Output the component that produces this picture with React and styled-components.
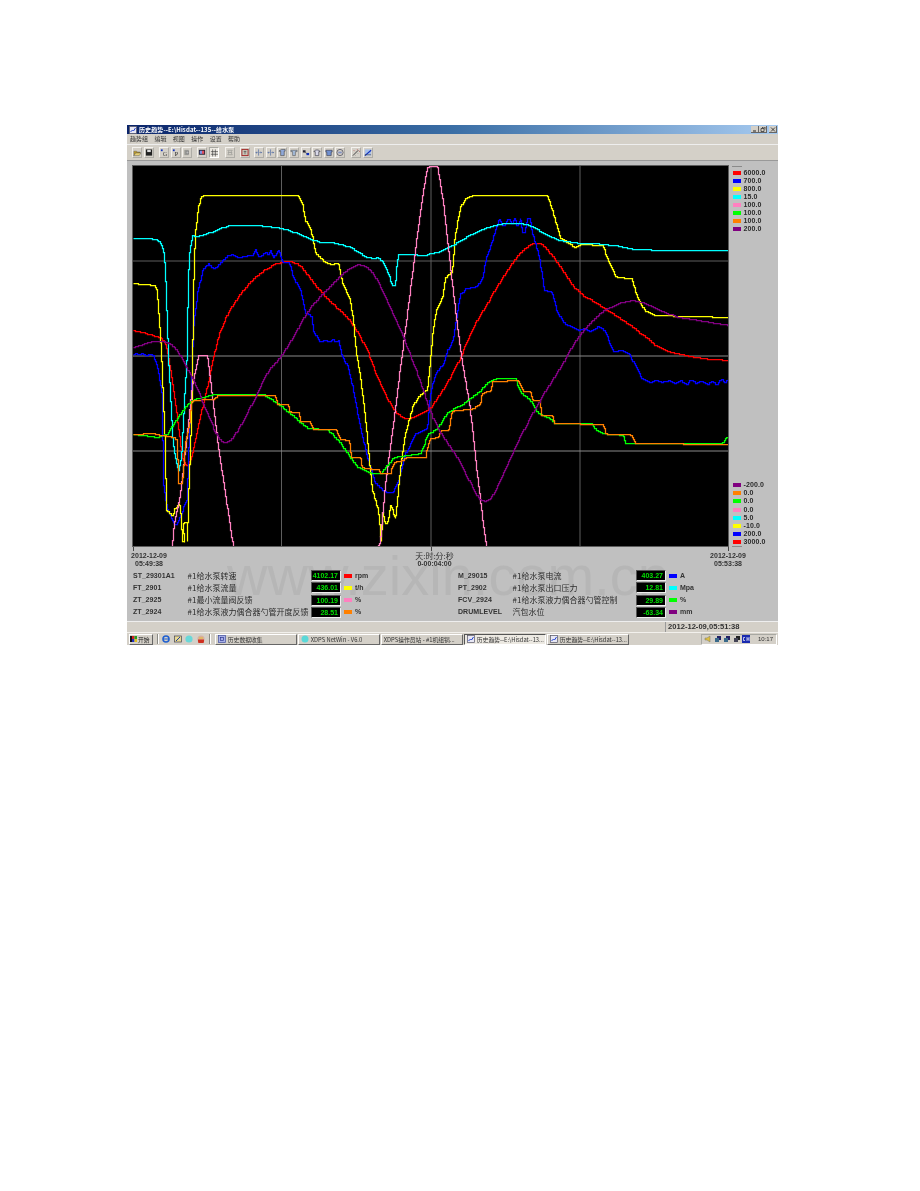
import React from "react";
import styled, { createGlobalStyle } from "styled-components";

const CJK = '"Noto Sans CJK SC", "Liberation Sans", sans-serif';
const LATIN = '"Liberation Sans", "Noto Sans CJK SC", sans-serif';

const Global = createGlobalStyle`
  html, body { margin: 0; padding: 0; background: #fff; }
  body { font-family: ${LATIN}; }
`;

const Page = styled.div`
  width: 920px;
  height: 1191px;
  padding: 125px 0 0 127px;
  box-sizing: border-box;
  background: #fff;
`;

const Window = styled.div`
  width: 651px;
  height: 520px;
  display: flex;
  flex-direction: column;
  background: #d4d0c8;
  color: #222;
  overflow: hidden;
  filter: blur(0.3px);
`;

const TitleBar = styled.div`
  flex: 0 0 9px;
  display: flex;
  align-items: center;
  padding: 0 1px 0 2px;
  gap: 2px;
  background: linear-gradient(90deg, #0a246a 0%, #3a6ea5 50%, #a6caf0 100%);
`;

const TitleText = styled.span`
  flex: 1;
  font: bold 6px/9px ${CJK};
  color: #fff;
  letter-spacing: 0.1px;
  white-space: nowrap;
`;

const WinControls = styled.div`
  display: flex;
  gap: 0;
`;

const WinButton = styled.div`
  width: 8px;
  height: 7px;
  margin-left: ${(p) => p.$ml || 0}px;
  background: #d4d0c8;
  border-right: 1px solid #666;
  border-bottom: 1px solid #666;
  box-sizing: border-box;
  display: flex;
  align-items: center;
  justify-content: center;
`;

const MenuBar = styled.div`
  flex: 0 0 11px;
  display: flex;
  align-items: center;
  gap: 6.4px;
  padding-left: 3px;
  border-bottom: 1px solid #eee;
  box-sizing: border-box;
`;

const MenuItem = styled.span`
  font: 6px/10px ${CJK};
  color: #333;
`;

const Toolbar = styled.div`
  flex: 0 0 16px;
  display: flex;
  align-items: center;
  padding: 0 0 1px 5px;
  box-sizing: border-box;
  border-bottom: 1px solid #999;
`;

const ToolGroup = styled.div`
  display: flex;
  gap: 1.6px;
  margin-left: ${(p) => p.$ml || 0}px;
`;

const ToolButton = styled.div`
  width: 10px;
  height: 11px;
  box-sizing: border-box;
  display: flex;
  align-items: center;
  justify-content: center;
  background: ${(p) => (p.$on ? "#ece9e2" : "#d4d0c8")};
  border: 1px solid;
  border-color: ${(p) => (p.$on ? "#a8a8a2 #fff #fff #a8a8a2" : "#f4f2ee #aeaca6 #aeaca6 #f4f2ee")};
`;

const ChartArea = styled.div`
  flex: 0 0 386px;
  display: flex;
  padding: 5px 0 1px 6px;
  box-sizing: border-box;
  background: #c0c0c0;
`;

const Plot = styled.div`
  width: 595px;
  height: 380px;
  background: #000;
  box-shadow: 0 0 0 1px #5c5c5c;
  flex: none;
  overflow: hidden;
`;

const PlotSvg = styled.svg`
  display: block;
  width: 595px;
  height: 380px;
`;

const Legend = styled.div`
  flex: 1;
  display: flex;
  flex-direction: column;
  justify-content: space-between;
  padding-left: 5px;
`;

const LegendGroup = styled.div`
  display: flex;
  flex-direction: column;
`;

const LegendTick = styled.div`
  width: 10px;
  height: 1px;
  margin-left: -1px;
  background: #8a8a8a;
  margin-bottom: ${(p) => p.$below}px;
`;

const LegendItem = styled.div`
  height: 8.1px;
  display: flex;
  align-items: center;
  gap: 2.5px;
`;

const Swatch = styled.span`
  flex: none;
  width: 8px;
  height: 4px;
  background: ${(p) => p.$c};
`;

const LegendValue = styled.span`
  font: bold 7px/8px ${LATIN};
  color: #2a2a2a;
  letter-spacing: 0.1px;
`;

const InfoPanel = styled.div`
  flex: 0 0 75px;
  position: relative;
  background: #c0c0c0;
  border-bottom: 1px solid #eee;
  box-sizing: border-box;
`;

const Watermark = styled.div`
  position: absolute;
  left: 100px;
  top: 0px;
  font: 56px/58px ${LATIN};
  color: #b6b6b6;
  white-space: nowrap;
`;

const TickRow = styled.div`
  position: relative;
  height: 5px;
  display: flex;
  justify-content: space-between;
  padding: 0 49px 0 6px;
`;

const Tick = styled.span`
  width: 1px;
  height: 4px;
  background: #444;
`;

const AxisRow = styled.div`
  position: relative;
  height: 17.6px;
  display: flex;
  justify-content: space-between;
  padding: 0 31px 0 3px;
`;

const AxisLabel = styled.div`
  width: 38px;
  text-align: center;
  font: bold 7px/8.2px ${LATIN};
  color: #333;
  white-space: nowrap;
  display: flex;
  flex-direction: column;
  align-items: center;
  margin-right: ${(p) => p.$mr || 0}px;
`;

const AxisUnit = styled.span`
  font: 8px/8.2px ${CJK};
  color: #333;
`;

const ReadoutGrid = styled.div`
  position: relative;
  display: grid;
  grid-template-columns: 325px 1fr;
  grid-auto-rows: 12.2px;
  padding-left: 6px;
`;

const Readout = styled.div`
  display: grid;
  grid-template-columns: 54.5px 123.5px 30px 3px 9px 1fr;
  align-items: center;
`;

const Tag = styled.span`
  font: bold 7px/10px ${LATIN};
  color: #333;
  letter-spacing: 0.05px;
  white-space: nowrap;
`;

const Desc = styled.span`
  font: 8px/10px ${CJK};
  color: #2c2c2c;
  white-space: nowrap;
`;

const Value = styled.span`
  grid-column: 3;
  height: 11px;
  box-sizing: border-box;
  background: #000;
  border: 1px solid;
  border-color: #555 #eee #eee #555;
  color: #00e000;
  font: bold 7px/9px ${LATIN};
  text-align: right;
  padding-right: 2px;
`;

const UnitSwatch = styled.span`
  grid-column: 5;
  width: 8px;
  height: 4px;
  background: ${(p) => p.$c};
`;

const Unit = styled.span`
  font: bold 7px/10px ${LATIN};
  color: #333;
  padding-left: 2px;
`;

const StatusBar = styled.div`
  flex: 0 0 10px;
  display: flex;
  justify-content: flex-end;
  background: #d4d0c8;
`;

const StatusField = styled.div`
  width: 113px;
  box-sizing: border-box;
  border-left: 1px solid #999;
  padding-left: 2px;
  font: bold 7.6px/10px ${LATIN};
  color: #333;
  white-space: nowrap;
`;

const Taskbar = styled.div`
  flex: 0 0 13px;
  display: flex;
  align-items: center;
  padding: 0 1px 0 2px;
  box-sizing: border-box;
  background: #d4d0c8;
  border-top: 1px solid #f2f0ec;
`;

const StartButton = styled.div`
  width: 24px;
  height: 11px;
  box-sizing: border-box;
  display: flex;
  align-items: center;
  gap: 0;
  border: 1px solid;
  border-color: #fff #666 #666 #fff;
  font: 5.8px/9px ${CJK};
  color: #222;
  white-space: nowrap;
`;

const Divider = styled.span`
  width: 1px;
  height: 10px;
  background: #8a8a84;
  box-shadow: 1px 0 0 #fff;
  margin: ${(p) => p.$m};
`;

const QuickLaunch = styled.div`
  display: flex;
  gap: 3.6px;
`;

const TaskButton = styled.div`
  width: 82px;
  height: 11px;
  margin-right: 1px;
  flex: none;
  box-sizing: border-box;
  display: flex;
  align-items: center;
  gap: 2px;
  padding-left: 2px;
  border: 1px solid;
  border-color: ${(p) => (p.$on ? "#555 #fff #fff #555" : "#fff #666 #666 #fff")};
  background: ${(p) => (p.$on ? "#ece9e2" : "#d4d0c8")};
  font: 5.8px/9px ${CJK};
  color: #333;
  white-space: nowrap;
  overflow: hidden;
`;

const Tray = styled.div`
  margin-left: auto;
  width: 76px;
  height: 11px;
  box-sizing: border-box;
  display: flex;
  align-items: center;
  gap: 1.6px;
  padding-left: 2px;
  border: 1px solid;
  border-color: #a8a8a2 #fff #fff #a8a8a2;
`;

const Clock = styled.span`
  margin-left: auto;
  margin-right: 3px;
  font: 6px/9px ${LATIN};
  color: #333;
`;

const series = [
  ["#ff0000", true, "133,330 160,337 165,343 167,353 170,367 177,417 182,460 187,467 193,450 198,423 208,383 213,355 223,320 237,297 253,277 270,265 287,260 300,265 313,283 330,302 347,317 360,337 367,350 378,380 393,410 402,418 410,418 428,410 440,393 455,367 463,350 474,324 490,297 510,264 524,247 537,241 547,249 564,273 577,292 604,308 638,331 661,350 698,358 728,360"],
  ["#0000ff", false, "133,354 135,353 138,355 141,353 145,355 150,354 153,355 158,370 162,397 163,483 167,510 175,525 182,510 187,497 188,457 192,363 193,327 198,287 203,268 208,263 212,268 216,267 220,262 227,255 232,254 236,257 240,257 244,256 248,255 252,255 255,248 258,257 262,254 265,252 268,255 270,249 273,257 278,249 282,262 289,262 293,277 300,290 305,313 312,317 313,332 320,342 324,339 328,342 332,339 335,342 338,340 342,357 348,367 353,390 360,427 367,457 375,483 385,492 392,492 398,480 405,453 415,433 427,428 430,393 435,373 443,363 447,350 453,337 460,293 466,288 472,287 478,284 483,275 485,260 492,240 496,226 499,218 502,226 505,222 508,218 512,224 514,218 517,226 520,218 522,232 524,232 527,218 529,217 532,232 534,240 539,257 544,290 552,292 557,313 564,323 570,326 577,330 583,328 590,331 598,326 604,330 613,351 620,350 628,353 638,370 641,378 648,382 655,380 660,382 668,380 674,383 680,380 686,384 690,379 695,383 700,380 706,384 712,381 716,385 720,379 724,382 728,378"],
  ["#ffff00", false, "133,283 141,284 155,285 157,293 159,320 161,350 163,400 165,447 166,510 172,516 174,509 179,503 181,517 182,542 184,542 183,522 187,522 187,542 188,500 190,450 192,383 193,293 195,233 198,207 201,195 298,195 302,203 305,220 310,228 313,240 315,253 320,258 328,264 338,263 342,283 350,300 353,320 356,353 360,377 365,417 368,450 372,490 378,510 381,542 382,512 385,523 388,520 390,505 395,518 397,500 400,467 405,433 412,407 417,397 427,388 430,360 432,337 435,313 443,293 445,277 452,270 455,233 460,207 465,198 473,195 547,195 553,213 560,238 574,247 580,244 602,245 609,263 616,277 631,278 638,300 644,310 654,315 728,317"],
  ["#00ffff", true, "133,238 155,238 162,245 165,263 168,357 170,393 173,450 180,478 185,383 187,350 188,262 192,233 193,237 210,232 223,226 243,224 278,227 297,233 313,241 338,243 352,248 367,258 380,257 388,273 392,286 395,285 397,258 399,253 423,255 430,253 437,252 453,244 474,232 497,223 527,223 544,234 564,242 608,244 638,250 728,250"],
  ["#ff80c0", false, "172,547 173,528 180,493 185,450 192,383 198,355 207,355 210,380 218,447 227,507 233,547 M377,547 380,540 385,483 393,423 400,367 407,313 417,233 423,190 427,166 437,166 443,203 453,293 460,350 470,410 475,457 480,500 486,547"],
  ["#00ff00", false, "133,434 157,437 167,433 180,413 190,400 213,394 262,394 277,403 307,428 327,429 340,443 357,467 370,473 380,473 393,457 420,453 428,433 437,428 447,412 463,403 480,390 487,382 495,378 515,378 520,392 530,400 537,413 549,418 554,423 591,423 595,429 601,433 623,435 625,443 722,443 725,437 728,437"],
  ["#ff8000", false, "133,434 150,433 173,437 177,440 178,483 182,483 185,443 190,420 191,400 213,399 217,395 275,395 277,404 287,404 290,412 299,412 300,421 310,421 312,429 335,429 340,439 349,440 351,457 360,457 362,468 378,469 380,473 390,473 393,462 403,460 405,457 425,457 427,447 430,438 438,437 440,430 448,430 452,410 470,409 480,403 482,392 490,391 492,381 518,380 523,391 530,391 532,400 540,400 541,415 552,415 554,423 602,424 606,434 630,434 635,443 728,444"],
  ["#800080", true, "133,347 153,340 167,342 177,350 193,380 207,413 218,440 225,443 233,437 247,413 267,370 277,360 288,345 307,310 323,292 347,268 360,263 373,272 390,307 403,337 408,350 423,390 430,413 440,433 457,457 467,477 477,498 487,502 497,487 514,447 537,403 564,360 577,336 601,310 628,299 645,303 672,316 691,319 728,325"],
];

// Chaikin corner cutting, for the slow curves
const chaikin = (pts) => {
  const out = [pts[0]];
  for (let i = 0; i < pts.length - 1; i++) {
    const [ax, ay] = pts[i];
    const [bx, by] = pts[i + 1];
    out.push([ax * 0.75 + bx * 0.25, ay * 0.75 + by * 0.25]);
    out.push([ax * 0.25 + bx * 0.75, ay * 0.25 + by * 0.75]);
  }
  out.push(pts[pts.length - 1]);
  return out;
};

// Redraw a polyline as the pixel staircase a trend recorder draws
const stairs = (pts, step = 2.4) => {
  const dense = [pts[0]];
  let carry = 0;
  for (let i = 0; i < pts.length - 1; i++) {
    const [ax, ay] = pts[i];
    const [bx, by] = pts[i + 1];
    const len = Math.hypot(bx - ax, by - ay);
    let d = step - carry;
    while (d < len) {
      dense.push([ax + ((bx - ax) * d) / len, ay + ((by - ay) * d) / len]);
      d += step;
    }
    carry = len - (d - step);
  }
  dense.push(pts[pts.length - 1]);
  let path = "";
  let px = null;
  let py = null;
  dense.forEach(([x, y]) => {
    const rx = Math.round(x);
    const ry = Math.round(y);
    if (px === null) path += `M${rx} ${ry}`;
    else if (rx !== px || ry !== py) path += `H${rx}V${ry}`;
    px = rx;
    py = ry;
  });
  return path;
};

const toPath = (str, smooth) =>
  str
    .split(" M")
    .map((part) => {
      const pts = part.trim().split(" ").map((p) => p.split(",").map(Number));
      return stairs(smooth ? chaikin(pts) : pts);
    })
    .join("");

const legendTop = [["#ff0000", "6000.0"], ["#0000ff", "700.0"], ["#ffff00", "800.0"], ["#00ffff", "15.0"], ["#ff80c0", "100.0"], ["#00ff00", "100.0"], ["#ff8000", "100.0"], ["#800080", "200.0"]];
const legendBottom = [["#800080", "-200.0"], ["#ff8000", "0.0"], ["#00ff00", "0.0"], ["#ff80c0", "0.0"], ["#00ffff", "5.0"], ["#ffff00", "-10.0"], ["#0000ff", "200.0"], ["#ff0000", "3000.0"]];

const readouts = [
  ["ST_29301A1", "#1给水泵转速", "4102.17", "#ff0000", "rpm"],
  ["M_29015", "#1给水泵电流", "403.27", "#0000ff", "A"],
  ["FT_2901", "#1给水泵流量", "436.01", "#ffff00", "t/h"],
  ["PT_2902", "#1给水泵出口压力", "12.81", "#00ffff", "Mpa"],
  ["ZT_2925", "#1最小流量阀反馈", "100.19", "#ff80c0", "%"],
  ["FCV_2924", "#1给水泵液力偶合器勺管控制", "29.89", "#00ff00", "%"],
  ["ZT_2924", "#1给水泵液力偶合器勺管开度反馈", "28.51", "#ff8000", "%"],
  ["DRUMLEVEL", "汽包水位", "-63.34", "#800080", "mm"],
];

const ToolIcon = ({ kind }) => {
  const art = {
    open: <><path d="M1 3h3l1 1h3v1H3L1 8z" fill="#c8a020" stroke="#555" strokeWidth=".5" /><path d="M1 8l2-3h6L7 8z" fill="#e8d070" stroke="#555" strokeWidth=".5" /></>,
    save: <><rect x="1" y="1" width="7" height="7" fill="#222" /><rect x="2.5" y="1.5" width="4" height="2.5" fill="#ddd" /></>,
    g: <><path d="M1 1h2v2H1z" fill="#1030c0" /><text x="3.2" y="8.4" fontSize="7" fontFamily="Liberation Serif" fill="#444">G</text></>,
    p: <><path d="M1 1h2v2H1z" fill="#1030c0" /><text x="3.2" y="8.4" fontSize="7" fontFamily="Liberation Serif" fill="#222">P</text></>,
    gray: <><rect x="1.5" y="1.5" width="5" height="6" fill="#9a9a96" /><rect x="3.5" y="3" width="3" height="3" fill="#bbb" stroke="#777" strokeWidth=".5" /></>,
    bar: <><rect x="1" y="1.5" width="7" height="5.5" fill="#223" /><rect x="2" y="2.5" width="2.5" height="3.5" fill="#8090e0" /><rect x="4.5" y="2.5" width="2.5" height="3.5" fill="#e05060" /></>,
    grid: <path d="M3 1v8M6 1v8M1 3.5h8M1 6.5h8" stroke="#333" strokeWidth=".7" fill="none" />,
    dis: <path d="M2 2l1.5 2L2 7h5L5.500 4 7 2zM2 4.500h5" stroke="#9a9a96" strokeWidth=".8" fill="none" />,
    red: <><rect x="1" y="1" width="7" height="7" fill="#c8c4b8" stroke="#a02020" strokeWidth="1" /><path d="M4.500 2.500v4M3 3.500h3" stroke="#444" strokeWidth=".7" /></>,
    split: <path d="M4 1v7M1 4.500h2M5 4.500h2.500M2 3.500l-1 1 1 1M6.500 3.500l1 1-1 1" stroke="#4060a0" strokeWidth=".7" fill="none" />,
    tee: <path d="M1 3l3-2h4v2H7v5H3V3z" fill="#8fa8d8" stroke="#333" strokeWidth=".6" />,
    tee2: <path d="M1 2h7v1.500H6V8H3V3.500H1z" fill="#a8c0e0" stroke="#444" strokeWidth=".6" />,
    dots: <><rect x="1" y="2" width="3" height="2.500" fill="#223" /><rect x="5" y="5" width="3" height="2.500" fill="#1030c0" /><path d="M3 4l3 2" stroke="#333" strokeWidth=".6" /></>,
    arch: <path d="M1 3.500C2 1 7 1 8 3.500H6.500V8h-4V3.500z" fill="#d8d8e8" stroke="#334" strokeWidth=".7" />,
    arch2: <path d="M1 2h7v2H7v4H2V4H1z" fill="#7090d0" stroke="#334" strokeWidth=".7" />,
    ring: <><circle cx="4.500" cy="4.500" r="3.500" fill="none" stroke="#445" strokeWidth=".8" /><rect x="2.500" y="3.500" width="4" height="2" fill="#8090c0" /></>,
    wand: <><path d="M1 8l6-6" stroke="#333" strokeWidth="1" /><path d="M6 1l.5 1M8 3l1 .5M2 2l1 1" stroke="#b03030" strokeWidth=".7" /><path d="M3 7l1 1M6 5l1 1" stroke="#888" strokeWidth=".7" /></>,
    pen: <><rect x="1" y="1" width="7" height="7" fill="#a8c0e8" /><path d="M1 8l7-6" stroke="#1030c0" strokeWidth="1.300" /><path d="M1 7h7" stroke="#333" strokeWidth=".6" /></>,
  };
  return (
    <svg width="9" height="9" viewBox="0 0 9 9" aria-hidden="true">
      {art[kind]}
    </svg>
  );
};

const Tool = ({ kind, on }) => (
  <ToolButton $on={on}>
    <ToolIcon kind={kind} />
  </ToolButton>
);

const GlyphSvg = styled.svg`
  flex: none;
`;

const TrendGlyph = () => (
  <GlyphSvg width="8" height="8" viewBox="0 0 8 8" aria-hidden="true">
    <rect x=".5" y=".5" width="7" height="7" fill="#e8e8f4" stroke="#556" strokeWidth=".7" />
    <path d="M1.500 6L3.500 4 4.500 5 6.500 2" stroke="#2040d0" strokeWidth="1" fill="none" />
  </GlyphSvg>
);

const DocGlyph = () => (
  <GlyphSvg width="8" height="8" viewBox="0 0 8 8" aria-hidden="true">
    <rect x=".5" y=".5" width="7" height="7" fill="#a8b0e8" stroke="#4050a0" strokeWidth=".7" />
    <rect x="2.500" y="2.500" width="3" height="3" fill="none" stroke="#303890" strokeWidth=".7" />
  </GlyphSvg>
);

const CyanDisc = () => (
  <GlyphSvg width="8" height="8" viewBox="0 0 8 8" aria-hidden="true">
    <circle cx="4" cy="4" r="3.500" fill="#5ad8d8" />
  </GlyphSvg>
);

const Flag = () => (
  <GlyphSvg width="8" height="8" viewBox="0 0 8 8" aria-hidden="true">
    <rect x="0" y="1" width="2" height="6" fill="#111" />
    <rect x="2" y="1" width="2.500" height="3" fill="#d02020" />
    <rect x="4.500" y="1" width="2.500" height="3" fill="#20a020" />
    <rect x="2" y="4" width="2.500" height="3" fill="#2030c0" />
    <rect x="4.500" y="4" width="2.500" height="3" fill="#e0c020" />
  </GlyphSvg>
);

const quick = [
  <><circle cx="4" cy="4" r="3" fill="none" stroke="#2060d0" strokeWidth="1.600" /><path d="M1 4h6" stroke="#2060d0" /></>,
  <><rect x=".5" y="1" width="7" height="6" fill="#e8d890" stroke="#445" strokeWidth=".7" /><path d="M2 6l4-4" stroke="#2040a0" /></>,
  <circle cx="4" cy="4" r="3.600" fill="#6ad8d8" />,
  <><circle cx="4" cy="4" r="3.600" fill="#d8b0a0" /><path d="M1 4.500h6V6a3 3 0 0 1-6 0z" fill="#d03020" /><path d="M2 3h4" stroke="#e8c030" /></>,
];

const trayIcons = [
  <path d="M1 3h2l3-2v6L3 5H1z" fill="#e0c040" stroke="#776" strokeWidth=".5" />,
  <><rect x="3" y="1" width="4" height="4" fill="#226" /><rect x="1" y="3" width="4" height="4" fill="#3a6a8a" /></>,
  <><rect x="3" y="1" width="4" height="4" fill="#226" /><rect x="1" y="3" width="4" height="4" fill="#3a6a8a" /></>,
  <><rect x="3" y="1" width="4" height="4" fill="#222" /><rect x="1" y="3" width="4" height="4" fill="#445" /></>,
];

export default function App() {
  return (
    <Page>
      <Global />
      <Window>
        <TitleBar>
          <TrendGlyph />
          <TitleText>历史趋势--E:\Hisdat--135--给水泵</TitleText>
          <WinControls>
            <WinButton>
              <svg width="6" height="5" viewBox="0 0 6 5" aria-hidden="true"><path d="M1 4h3" stroke="#222" /></svg>
            </WinButton>
            <WinButton>
              <svg width="6" height="5" viewBox="0 0 6 5" aria-hidden="true"><path d="M1 1.500h3v3H1zM2.500 1V0H5v2.500" fill="none" stroke="#222" strokeWidth=".7" /></svg>
            </WinButton>
            <WinButton $ml={2}>
              <svg width="6" height="5" viewBox="0 0 6 5" aria-hidden="true"><path d="M1 .5l4 4M5 .5l-4 4" stroke="#222" strokeWidth=".8" /></svg>
            </WinButton>
          </WinControls>
        </TitleBar>

        <MenuBar>
          {["趋势组", "编辑", "视图", "操作", "设置", "帮助"].map((m) => (
            <MenuItem key={m}>{m}</MenuItem>
          ))}
        </MenuBar>

        <Toolbar>
          <ToolGroup><Tool kind="open" /><Tool kind="save" /></ToolGroup>
          <ToolGroup $ml={5.4}><Tool kind="g" /><Tool kind="p" /><Tool kind="gray" /></ToolGroup>
          <ToolGroup $ml={5}><Tool kind="bar" /><Tool kind="grid" on /></ToolGroup>
          <ToolGroup $ml={6.5}><Tool kind="dis" /></ToolGroup>
          <ToolGroup $ml={5}><Tool kind="red" /></ToolGroup>
          <ToolGroup $ml={4}>
            <Tool kind="split" /><Tool kind="split" /><Tool kind="tee" /><Tool kind="tee2" />
            <Tool kind="dots" /><Tool kind="arch" /><Tool kind="arch2" /><Tool kind="ring" />
          </ToolGroup>
          <ToolGroup $ml={5.5}><Tool kind="wand" /><Tool kind="pen" /></ToolGroup>
        </Toolbar>

        <ChartArea>
          <Plot>
            <PlotSvg viewBox="133 166 595 380" aria-hidden="true">
              <path d="M281.500 166V546M431 166V546M580 166V546" stroke="#5e5e5e" strokeWidth="1" fill="none" />
              <path d="M133 261H728" stroke="#5e5e5e" strokeWidth="1" />
              <path d="M133 356H728M133 451H728" stroke="#8a8a8a" strokeWidth="1" />
              <g transform="translate(.5 .5)">
                {series.map(([c, smooth, pts]) => (
                  <path key={c} d={toPath(pts, smooth)} stroke={c} strokeWidth="1.250" fill="none" strokeLinejoin="miter" />
                ))}
              </g>
            </PlotSvg>
          </Plot>
          <Legend>
            <LegendGroup>
              <LegendTick $below={1.5} />
              {legendTop.map(([c, v]) => (
                <LegendItem key={c}><Swatch $c={c} /><LegendValue>{v}</LegendValue></LegendItem>
              ))}
            </LegendGroup>
            <LegendGroup>
              {legendBottom.map(([c, v]) => (
                <LegendItem key={c}><Swatch $c={c} /><LegendValue>{v}</LegendValue></LegendItem>
              ))}
              <LegendTick $below={-1} />
            </LegendGroup>
          </Legend>
        </ChartArea>

        <InfoPanel>
          <Watermark>www.zixin.com.cn</Watermark>
          <TickRow><Tick /><Tick /><Tick /></TickRow>
          <AxisRow>
            <AxisLabel><span>2012-12-09</span><span>05:49:38</span></AxisLabel>
            <AxisLabel $mr={8}><AxisUnit>天:时:分:秒</AxisUnit><span>0-00:04:00</span></AxisLabel>
            <AxisLabel><span>2012-12-09</span><span>05:53:38</span></AxisLabel>
          </AxisRow>
          <ReadoutGrid>
            {readouts.map(([tag, desc, val, c, unit]) => (
              <Readout key={tag}>
                <Tag>{tag}</Tag>
                <Desc>{desc}</Desc>
                <Value>{val}</Value>
                <UnitSwatch $c={c} />
                <Unit>{unit}</Unit>
              </Readout>
            ))}
          </ReadoutGrid>
        </InfoPanel>

        <StatusBar>
          <StatusField>2012-12-09,05:51:38</StatusField>
        </StatusBar>

        <Taskbar>
          <StartButton><Flag />开始</StartButton>
          <Divider $m="0 4px 0 4px" />
          <QuickLaunch>
            {quick.map((q, i) => (
              <svg key={i} width="8" height="8" viewBox="0 0 8 8" aria-hidden="true">{q}</svg>
            ))}
          </QuickLaunch>
          <Divider $m="0 5px 0 4px" />
          <TaskButton><DocGlyph />历史数据收集</TaskButton>
          <TaskButton><CyanDisc />XDPS NetWin  -  V6.0</TaskButton>
          <TaskButton>XDPS操作员站 - #1机组锅...</TaskButton>
          <TaskButton $on><TrendGlyph />历史趋势--E:\Hisdat--13...</TaskButton>
          <TaskButton><TrendGlyph />历史趋势--E:\Hisdat--13...</TaskButton>
          <Tray>
            {trayIcons.map((t, i) => (
              <svg key={i} width="8" height="8" viewBox="0 0 8 8" aria-hidden="true">{t}</svg>
            ))}
            <svg width="8" height="8" viewBox="0 0 8 8" aria-hidden="true">
              <rect width="8" height="8" fill="#1a2ab0" />
              <path d="M3 2.500H1.500v3H3M5 2v4M7 2v4M5 4h2" stroke="#fff" strokeWidth=".7" fill="none" />
            </svg>
            <Clock>10:17</Clock>
          </Tray>
        </Taskbar>
      </Window>
    </Page>
  );
}
